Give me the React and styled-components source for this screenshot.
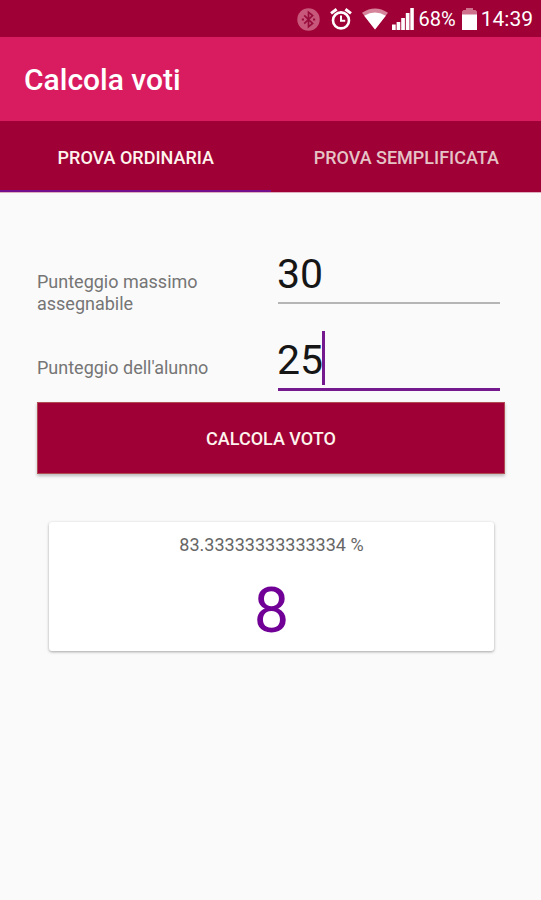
import React, { useState } from 'react'
import styled, { createGlobalStyle } from 'styled-components'

const TABS = ['Prova ordinaria', 'Prova semplificata']

const BluetoothIcon = () => (
  <svg width="23" height="23" viewBox="0 0 23 23">
    <circle cx="11.5" cy="11.5" r="11.2" fill="#c8587b" />
    <path
      d="M7.2 7.4l8.4 8-4.1 3.4V4.2l4.1 3.4-8.4 8"
      fill="none"
      stroke="#980c3b"
      strokeWidth="1.7"
    />
    <path d="M4.8 10.4H7v2.2H4.8zM16 10.4h2.2v2.2H16z" fill="#980c3b" />
  </svg>
)

const AlarmIcon = () => (
  <svg width="22" height="22" viewBox="0 0 22 22" fill="none" stroke="#fff">
    <circle cx="11" cy="12.4" r="8" strokeWidth="2.6" />
    <path d="M11 7.4v5.4h4.2" strokeWidth="2" />
    <path d="M1 5.4L6.6 1.3M21 5.4L15.4 1.3" strokeWidth="3" />
  </svg>
)

const WifiIcon = () => (
  <svg width="26" height="22" viewBox="0 0 26 22">
    <path d="M0 4.8Q13-4 26 4.8L13 21.6z" fill="#d6849b" />
    <path d="M2.2 7.7Q13 1.4 23.8 7.7L13 21.6z" fill="#fff" />
  </svg>
)

const SignalIcon = () => (
  <svg width="22" height="22" viewBox="0 0 22 22" fill="#fff">
    <path d="M0 16.5h3.7V22H0zM4.6 14h3.7v8H4.6zM9.2 10h3.7v12H9.2zM13.8 5h3.7v17h-3.7zM18.3 0h3.5v22h-3.5z" />
  </svg>
)

const BatteryIcon = () => (
  <svg width="15" height="22" viewBox="0 0 15 22">
    <path d="M4 0h7v2h2.5L15 3.5V7H0V3.5L1.5 2H4z" fill="#cd718c" />
    <path d="M0 6.5h15V22H0z" fill="#fff" />
  </svg>
)

const App = () => {
  const [activeTab, setActiveTab] = useState(0)
  const [max, setMax] = useState('30')
  const [score] = useState('25')

  const percent = (Number(score) / Number(max)) * 100

  return (
    <>
      <GlobalStyle />
      <Screen>
        <StatusBar>
          <BluetoothIcon />
          <AlarmIcon />
          <WifiIcon />
          <SignalIcon />
          <Percent>68%</Percent>
          <BatteryIcon />
          <Clock>14:39</Clock>
        </StatusBar>
        <AppBar>
          <Title>Calcola voti</Title>
        </AppBar>
        <Tabs>
          {TABS.map((tab, i) => (
            <Tab
              key={tab}
              type="button"
              $active={i === activeTab}
              onClick={() => setActiveTab(i)}
            >
              {tab}
            </Tab>
          ))}
        </Tabs>
        <Content>
          <Row>
            <Label htmlFor="max">Punteggio massimo assegnabile</Label>
            <Input
              id="max"
              value={max}
              onChange={e => setMax(e.target.value)}
            />
          </Row>
          <Row>
            <Label as="span">Punteggio dell'alunno</Label>
            <FocusedField>
              {score}
              <Caret />
            </FocusedField>
          </Row>
          <Button type="button">Calcola voto</Button>
          <Card>
            <Result>{percent} %</Result>
            <Grade>{Math.round(percent / 10)}</Grade>
          </Card>
        </Content>
      </Screen>
    </>
  )
}

const GlobalStyle = createGlobalStyle`
  * {
    box-sizing: border-box;
  }

  body {
    margin: 0;
    background: #fafafa;
    font-family: Roboto, sans-serif;
  }

  button,
  input {
    border: 0;
    border-radius: 0;
    outline: 0;
    font-family: inherit;
  }
`

const Screen = styled.div`
  height: 900px;
  overflow: hidden;
  background: #fafafa;
`

const StatusBar = styled.div`
  display: flex;
  align-items: center;
  justify-content: flex-end;
  height: 37px;
  padding: 1px 8px 0 0;
  background: #9f0035;
  color: #fff;

  svg {
    flex: none;
    margin-right: 10px;
  }

  svg:nth-of-type(3) {
    margin-right: 4px;
  }

  svg:nth-of-type(4) {
    margin-right: 5px;
  }

  svg:nth-of-type(5) {
    margin-right: 4px;
  }
`

const Percent = styled.span`
  margin-right: 6px;
  font-size: 20px;
`

const Clock = styled.span`
  font-size: 21px;
`

const AppBar = styled.header`
  display: flex;
  align-items: center;
  height: 84px;
  padding: 1px 24px 0;
  background: #d91c5f;
`

const Title = styled.h1`
  margin: 0;
  color: #fff;
  font-size: 30px;
  font-weight: 500;
`

const Tabs = styled.nav`
  display: grid;
  grid-template-columns: 1fr 1fr;
  height: 71px;
  box-shadow: 0 1px 0 rgba(159, 0, 53, 0.3);
`

const Tab = styled.button`
  padding: 4px 0 0 1px;
  border-bottom: 2px solid ${props => (props.$active ? '#750e8c' : '#9f0035')};
  background: #9f0035;
  color: ${props => (props.$active ? '#fff3ee' : '#e5c3c6')};
  font-size: 18px;
  font-weight: 500;
  text-transform: uppercase;
`

const Content = styled.main`
  display: flex;
  flex-direction: column;
  padding: 52px 36px 0 37px;
`

const Row = styled.div`
  display: grid;
  grid-template-columns: 200px 222px;
  column-gap: 40.5px;
  align-items: baseline;
  height: 60px;

  & + & {
    margin-top: 27px;
  }
`

const Label = styled.label`
  padding-right: 20px;
  color: #757575;
  font-size: 18px;
  line-height: 21.5px;
`

const Input = styled.input`
  width: 222px;
  height: 60px;
  padding: 2px 0 0;
  border-bottom: 2px solid #b5b5b5;
  background: transparent;
  color: #161616;
  font-size: 41px;
  text-indent: -0.5px;
`

const FocusedField = styled.div`
  display: flex;
  align-items: flex-start;
  height: 60px;
  padding-top: 2px;
  border-bottom: 3px solid #75198f;
  color: #161616;
  font-size: 41px;
  line-height: 54px;
  text-indent: -0.5px;
`

const Caret = styled.span`
  width: 3px;
  height: 54px;
  margin: -2px 0 0 -1px;
  background: #75198f;
`

const Button = styled.button`
  height: 72px;
  margin-top: 11px;
  border: 1px solid #b04b52;
  background: #9f0035;
  box-shadow: 0 2px 3px rgba(0, 0, 0, 0.25);
  color: #fff3ee;
  font-size: 18px;
  font-weight: 500;
  text-transform: uppercase;
`

const Card = styled.section`
  display: flex;
  flex-direction: column;
  align-items: center;
  height: 129px;
  margin: 48px 11px 0 12px;
  padding-top: 12px;
  border-radius: 3px;
  background: #fff;
  box-shadow: 0 1px 3px rgba(0, 0, 0, 0.35);
`

const Result = styled.span`
  color: #666;
  font-size: 18px;
  line-height: 21px;
`

const Grade = styled.span`
  margin-top: 19px;
  color: #700096;
  font-size: 63px;
  line-height: 74px;
`

export default App
